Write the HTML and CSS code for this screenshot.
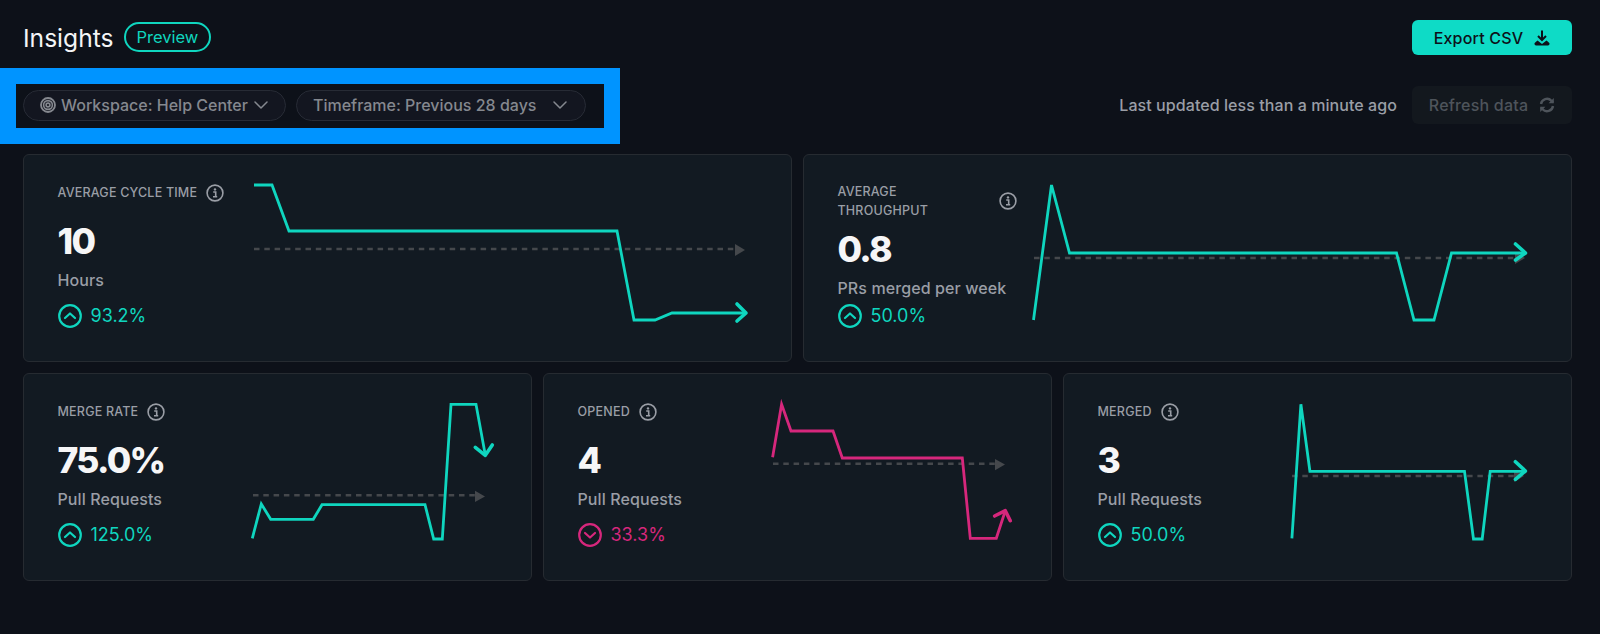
FILE: index.html
```html
<!DOCTYPE html>
<html lang="en">
<head>
    <meta charset="UTF-8">
    <meta name="viewport" content="width=device-width, initial-scale=1.0">
    <title>Insights</title>
    <link rel="stylesheet" href="styles.css">
</head>
<body>

<svg class="icon-defs" aria-hidden="true">
    <symbol id="info" viewBox="0 0 18 18">
        <circle cx="9" cy="9" r="7.9" fill="none" stroke="currentColor" stroke-width="1.6"/>
        <circle cx="9" cy="5.4" r="1.2" fill="currentColor"/>
        <path d="M7.2 8h2.5v4.4M7 12.7h4.2" fill="none" stroke="currentColor" stroke-width="1.6"/>
    </symbol>
    <symbol id="up" viewBox="0 0 24 24">
        <circle cx="12" cy="12" r="10.8" fill="none" stroke="currentColor" stroke-width="2.2"/>
        <path d="M7 14l5-4.5 5 4.5" fill="none" stroke="currentColor" stroke-width="2.2" stroke-linecap="round" stroke-linejoin="round"/>
    </symbol>
    <symbol id="down" viewBox="0 0 24 24">
        <circle cx="12" cy="12" r="10.8" fill="none" stroke="currentColor" stroke-width="2.2"/>
        <path d="M7 10l5 4.5 5-4.5" fill="none" stroke="currentColor" stroke-width="2.2" stroke-linecap="round" stroke-linejoin="round"/>
    </symbol>
    <symbol id="chevron" viewBox="0 0 14 8">
        <path d="M1 1l6 6 6-6" fill="none" stroke="currentColor" stroke-width="1.5" stroke-linecap="round" stroke-linejoin="round"/>
    </symbol>
</svg>

<main class="page">
    <header class="page-header">
        <div class="title-group">
            <h1>Insights</h1>
            <span class="preview-badge">Preview</span>
        </div>
        <button type="button" class="export-btn">
            Export CSV
            <svg class="export-icon" viewBox="0 0 16 16">
                <path d="M8 0.5v9M4 6l4 4 4-4" fill="none" stroke="currentColor" stroke-width="2"/>
                <path d="M3.5 10.5L1.2 12.6A1.5 1.5 0 0 0 2 15.4h12a1.5 1.5 0 0 0 .8-2.8l-2.3-2.1L8 14z" fill="currentColor"/>
            </svg>
        </button>
    </header>

    <div class="toolbar">
        <div class="filters">
            <button type="button" class="filter-pill filter-workspace">
                <svg class="workspace-icon" viewBox="0 0 16 16" fill="none" stroke="currentColor">
                    <circle cx="8" cy="8" r="7" stroke-width="1.8"/>
                    <circle cx="8" cy="8" r="4.4" stroke-width="1.6"/>
                    <circle cx="8" cy="8" r="1.9" stroke-width="1.6"/>
                </svg>
                <span>Workspace: Help Center</span>
                <svg class="chevron"><use href="#chevron"/></svg>
            </button>
            <button type="button" class="filter-pill filter-timeframe">
                <span>Timeframe: Previous 28 days</span>
                <svg class="chevron"><use href="#chevron"/></svg>
            </button>
            <div class="highlight-frame"></div>
        </div>
        <div class="refresh-group">
            <span class="last-updated">Last updated less than a minute ago</span>
            <button type="button" class="refresh-btn">
                Refresh data
                <svg class="refresh-icon" viewBox="0 0 16 16" fill="none" stroke="currentColor" stroke-width="2.4">
                    <path d="M2 7a6 6 0 0 1 10.4-3.2L14 5.5"/>
                    <path d="M14.8 1v5.2H9.6z" fill="currentColor" stroke="none"/>
                    <path d="M14 9a6 6 0 0 1-10.4 3.2L2 10.5"/>
                    <path d="M1.2 15V9.8h5.2z" fill="currentColor" stroke="none"/>
                </svg>
            </button>
        </div>
    </div>

    <section class="metrics">
        <article class="card card-half">
            <div class="card-info">
                <div class="card-label"><span>Average cycle time</span><svg class="info-icon"><use href="#info"/></svg></div>
                <div class="card-value">10</div>
                <div class="card-unit">Hours</div>
                <div class="card-delta"><svg class="delta-icon"><use href="#up"/></svg>93.2%</div>
            </div>
            <svg class="chart">
                <path class="baseline" d="M1 95H482"/>
                <path class="baseline-tip" d="M482 90l10 6-10 6z"/>
                <path class="trend" d="M1 31H19L36 77H364L381 166H402L419 159H493"/>
                <path class="trend trend-arrow" d="M484 150l9 9-9 8"/>
            </svg>
        </article>

        <article class="card card-half card-wrapped">
            <div class="card-info">
                <div class="card-label"><span>Average<br>throughput</span><svg class="info-icon"><use href="#info"/></svg></div>
                <div class="card-value">0.8</div>
                <div class="card-unit">PRs merged per week</div>
                <div class="card-delta"><svg class="delta-icon"><use href="#up"/></svg>50.0%</div>
            </div>
            <svg class="chart">
                <path class="baseline" d="M1 104H482"/>
                <path class="baseline-tip" d="M482 98l10 6-10 6z"/>
                <path class="trend" d="M.5 166L18.5 31L36.5 99H363.5L381 166H401L418.5 99H492.5"/>
                <path class="trend trend-arrow" d="M482.5 90l10 9-10 7"/>
            </svg>
        </article>

        <article class="card card-third">
            <div class="card-info">
                <div class="card-label"><span>Merge rate</span><svg class="info-icon"><use href="#info"/></svg></div>
                <div class="card-value">75.0%</div>
                <div class="card-unit">Pull Requests</div>
                <div class="card-delta"><svg class="delta-icon"><use href="#up"/></svg>125.0%</div>
            </div>
            <svg class="chart">
                <path class="baseline" d="M0 122.3H222"/>
                <path class="baseline-tip" d="M222 117.7l10 5.8-10 5.5z"/>
                <path class="trend" d="M-.7 165.3L8.3 131L17.7 146.3H60.3L69 131.7H172L180.7 166H189.3L198 31.3H223L232.3 82"/>
                <path class="trend trend-arrow" d="M222.3 74.3l10 8 7-10.3"/>
            </svg>
        </article>

        <article class="card card-third card-negative">
            <div class="card-info">
                <div class="card-label"><span>Opened</span><svg class="info-icon"><use href="#info"/></svg></div>
                <div class="card-value">4</div>
                <div class="card-unit">Pull Requests</div>
                <div class="card-delta"><svg class="delta-icon"><use href="#down"/></svg>33.3%</div>
            </div>
            <svg class="chart">
                <path class="baseline" d="M0 90.7H222"/>
                <path class="baseline-tip" d="M222 86l10 5.5-10 5.8z"/>
                <path class="trend" d="M-.4 84.3L8.6 31.3L18 58H60L69.3 85H189.3L197.3 165.3H223.3L232.3 137.7"/>
                <path class="trend trend-arrow" d="M221.6 143l10.7-5.3 5 10"/>
            </svg>
        </article>

        <article class="card card-third">
            <div class="card-info">
                <div class="card-label"><span>Merged</span><svg class="info-icon"><use href="#info"/></svg></div>
                <div class="card-value">3</div>
                <div class="card-unit">Pull Requests</div>
                <div class="card-delta"><svg class="delta-icon"><use href="#up"/></svg>50.0%</div>
            </div>
            <svg class="chart">
                <path class="baseline" d="M-1 103H221"/>
                <path class="baseline-tip" d="M221 97l10 6-10 6z"/>
                <path class="trend" d="M-1.1 165.3L7.9 31.3L16.9 98.3H171.5L180.5 166H189.2L197.2 98.3H232.4"/>
                <path class="trend trend-arrow" d="M222.4 88.7l10 9.3-10 8.3"/>
            </svg>
        </article>
    </section>
</main>

</body>
</html>
```

FILE: styles.css
```css
body {
    margin: 0;
    background-color: #0d1119;
    font-family: Inter, "Noto Sans", sans-serif;
    font-weight: 450;
    color: #9a9ea6;
    overflow: hidden;
}

button {
    font-family: inherit;
    font-weight: inherit;
    border: none;
    cursor: pointer;
}

.icon-defs {
    display: none;
}

.page {
    padding: 20px 28px 0 23px;
}

.page-header {
    display: flex;
    justify-content: space-between;
    align-items: center;
    height: 35px;
}

.title-group {
    display: flex;
    align-items: center;
    gap: 10px;
}

h1 {
    margin: 0;
    font-size: 24.6px;
    font-weight: 400;
    color: #f4f5f6;
}

.preview-badge {
    box-sizing: border-box;
    height: 30px;
    margin-top: -1px;
    padding: 0 11px;
    line-height: 26px;
    font-size: 16.5px;
    font-weight: 400;
    color: #0fd6bf;
    border: 2px solid #0fd6bf;
    border-radius: 15px;
}

.export-btn {
    display: flex;
    align-items: center;
    justify-content: center;
    gap: 11px;
    width: 160px;
    height: 35px;
    font-size: 16px;
    letter-spacing: 0.2px;
    color: #0d1119;
    background-color: #0edbc6;
    border-radius: 6px;
}

.export-icon {
    width: 16px;
    height: 16px;
}

.toolbar {
    display: flex;
    justify-content: space-between;
    align-items: center;
    height: 38px;
    margin-top: 31px;
}

.filters {
    position: relative;
    display: flex;
    gap: 10px;
}

.highlight-frame {
    position: absolute;
    left: -23px;
    top: -22px;
    box-sizing: border-box;
    width: 620px;
    height: 76px;
    border: 16px solid #0094ff;
}

.filter-pill {
    display: flex;
    align-items: center;
    box-sizing: border-box;
    height: 31px;
    font-size: 16px;
    color: #85888f;
    background-color: #131620;
    border: 1.5px solid #272b35;
    border-radius: 16px;
}

.filter-workspace {
    width: 263px;
    padding: 0 17px 0 16px;
}

.filter-timeframe {
    width: 290px;
    padding: 0 18px 0 16px;
}

.workspace-icon {
    width: 16px;
    height: 16px;
    margin-right: 5px;
}

.chevron {
    width: 14px;
    height: 8px;
    margin-left: auto;
}

.refresh-group {
    display: flex;
    align-items: center;
    gap: 15px;
}

.last-updated {
    font-size: 16px;
    letter-spacing: 0.07px;
}

.refresh-btn {
    display: flex;
    align-items: center;
    justify-content: center;
    gap: 11px;
    width: 160px;
    height: 38px;
    font-size: 16px;
    letter-spacing: 0.2px;
    color: #4e545b;
    background-color: #13181e;
    border-radius: 6px;
}

.refresh-icon {
    width: 16px;
    height: 16px;
}

.metrics {
    display: grid;
    grid-template-columns: repeat(6, 1fr);
    grid-auto-rows: 208px;
    gap: 11px;
    margin-top: 30px;
}

.card {
    display: flex;
    box-sizing: border-box;
    padding-left: 33.5px;
    background-color: #121a22;
    border: 1.5px solid #262b31;
    border-radius: 6px;
    --accent: #0fd6bf;
}

.card-half {
    grid-column: span 3;
}

.card-third {
    grid-column: span 2;
}

.card-negative {
    --accent: #d6277c;
}

.card-info {
    flex: none;
    width: 179px;
    padding-top: 28px;
}

.card-wrapped .card-info {
    padding-top: 27px;
}

.card-label {
    display: flex;
    align-items: center;
    gap: 9px;
    font-size: 12.5px;
    line-height: 19px;
    text-transform: uppercase;
    letter-spacing: 0.2px;
}

.info-icon {
    flex: none;
    width: 18px;
    height: 18px;
}

.card-wrapped .card-label span {
    flex: 1;
}

.card-value {
    margin-top: 18px;
    font-size: 35.5px;
    font-weight: 800;
    line-height: 44px;
    letter-spacing: -1.7px;
    color: #f6f6f7;
}

.card-wrapped .card-value {
    margin-top: 8px;
}

.card-unit {
    margin-top: 6px;
    font-size: 16px;
    line-height: 20px;
    letter-spacing: 0.1px;
}

.card-delta {
    display: flex;
    align-items: center;
    gap: 9px;
    margin-top: 14px;
    font-size: 18px;
    font-weight: 400;
    line-height: 24px;
    color: var(--accent);
}

.card-wrapped .card-delta {
    margin-top: 6px;
}

.delta-icon {
    width: 24px;
    height: 24px;
}

.chart {
    flex: none;
    width: 290px;
    height: 100%;
    margin: -1px 0 0 16px;
    overflow: visible;
    fill: none;
}

.baseline {
    stroke: #45484c;
    stroke-width: 2.4;
    stroke-dasharray: 5.5 4.8;
}

.baseline-tip {
    fill: #45484c;
}

.trend {
    stroke: var(--accent);
    stroke-width: 2.8;
    stroke-linejoin: miter;
}

.trend-arrow {
    stroke-width: 3.6;
    stroke-linecap: round;
    stroke-linejoin: round;
}
```
